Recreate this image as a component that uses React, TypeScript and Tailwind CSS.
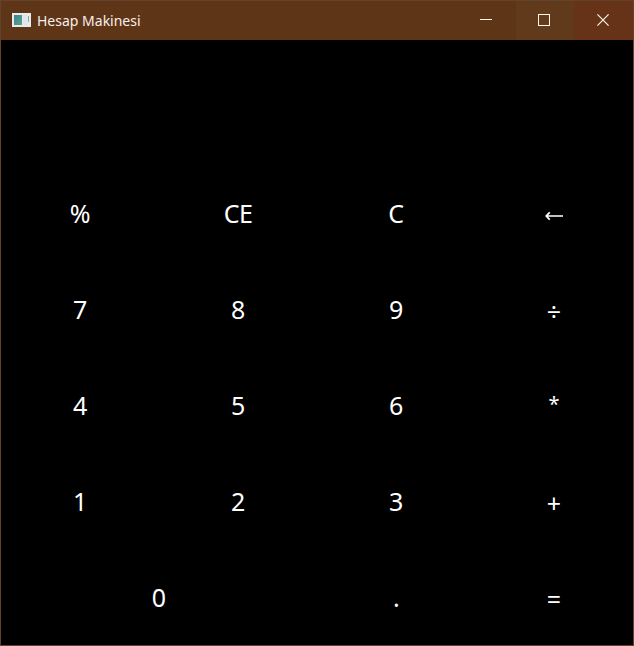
type Key = { label: string; kind?: 'arrow' | 'star' | 'operator' | 'wide' };

const keys: Key[] = [
  { label: '%' }, { label: 'CE' }, { label: 'C' }, { label: '←', kind: 'arrow' },
  { label: '7' }, { label: '8' }, { label: '9' }, { label: '÷', kind: 'operator' },
  { label: '4' }, { label: '5' }, { label: '6' }, { label: '*', kind: 'star' },
  { label: '1' }, { label: '2' }, { label: '3' }, { label: '+', kind: 'operator' },
  { label: '0', kind: 'wide' }, { label: '.' }, { label: '=', kind: 'operator' },
];

const keyStyles = {
  plain: 'pb-[2px] text-[25px] tracking-[-0.5px]',
  wide: 'col-span-2 pb-[2px] text-[25px]',
  operator: 'pt-px text-[25px]',
  star: 'pb-[5px] text-[20px]',
  arrow: 'pt-[4px] text-[25px]',
};

function AppIcon() {
  return (
    <svg width="19" height="14" viewBox="0 0 19 14" shapeRendering="crispEdges" className="-mt-[2px]" aria-hidden="true">
      <defs>
        <linearGradient id="pane" x1="0" y1="0" x2="1" y2="1">
          <stop offset="0" stopColor="#3f8296" />
          <stop offset="1" stopColor="#55a68a" />
        </linearGradient>
      </defs>
      <rect width="19" height="14" fill="#e9ebea" />
      <rect x="2" y="2" width="8" height="10" fill="url(#pane)" />
      <rect x="11" y="2" width="4" height="10" fill="#dfe6ea" />
      <rect x="16" y="3" width="1" height="6" fill="#81a99b" />
    </svg>
  );
}

function TitleBar() {
  return (
    <header className="flex h-[39px] shrink-0 items-stretch bg-[#5f3518]">
      <div className="flex flex-1 items-center gap-[6px] pl-[11px]">
        <AppIcon />
        <h1 className="text-[14px] leading-5 text-[#f7efe9]">Hesap Makinesi</h1>
      </div>
      <button aria-label="Minimize" className="flex w-[58px] items-center justify-center pr-[2px] pb-px">
        <svg width="12" height="12" viewBox="0 0 12 12" stroke="#fff6e6" fill="none">
          <path d="M0 5.5h12" />
        </svg>
      </button>
      <button aria-label="Maximize" className="flex w-[58px] items-center justify-center bg-[#61391b] pr-[2px] pb-px">
        <svg width="12" height="12" viewBox="0 0 12 12" stroke="#fff6e6" fill="none">
          <rect x=".5" y=".5" width="11" height="11" />
        </svg>
      </button>
      <button aria-label="Close" className="flex w-[59px] items-center justify-center bg-[#663218] pr-px pb-px">
        <svg width="12" height="12" viewBox="0 0 12 12" stroke="#fff6e6" strokeWidth="1.2" fill="none">
          <path d="M.4.4l11.2 11.2M11.6.4L.4 11.6" />
        </svg>
      </button>
    </header>
  );
}

export default function App() {
  return (
    <div className="flex h-[646px] w-[634px] flex-col overflow-hidden border border-[#65422b] bg-black font-['Noto_Sans','Open_Sans',sans-serif] text-white">
      <TitleBar />
      <output className="block h-[126px] shrink-0" />
      <main className="grid w-[632px] shrink-0 grid-cols-4 auto-rows-[96px]">
        {keys.map((key) => (
          <button
            key={key.label}
            aria-label={key.label}
            className={`flex items-center justify-center leading-8 ${keyStyles[key.kind ?? 'plain']}`}
          >
            {key.kind === 'arrow' ? (
              <svg width="18" height="10" viewBox="0 0 18 10" fill="none" stroke="white" strokeWidth="1.7">
                <path d="M1.5 5H18M4.7 1.3L1.2 5l3.5 3.7" />
              </svg>
            ) : (
              key.label
            )}
          </button>
        ))}
      </main>
    </div>
  );
}
